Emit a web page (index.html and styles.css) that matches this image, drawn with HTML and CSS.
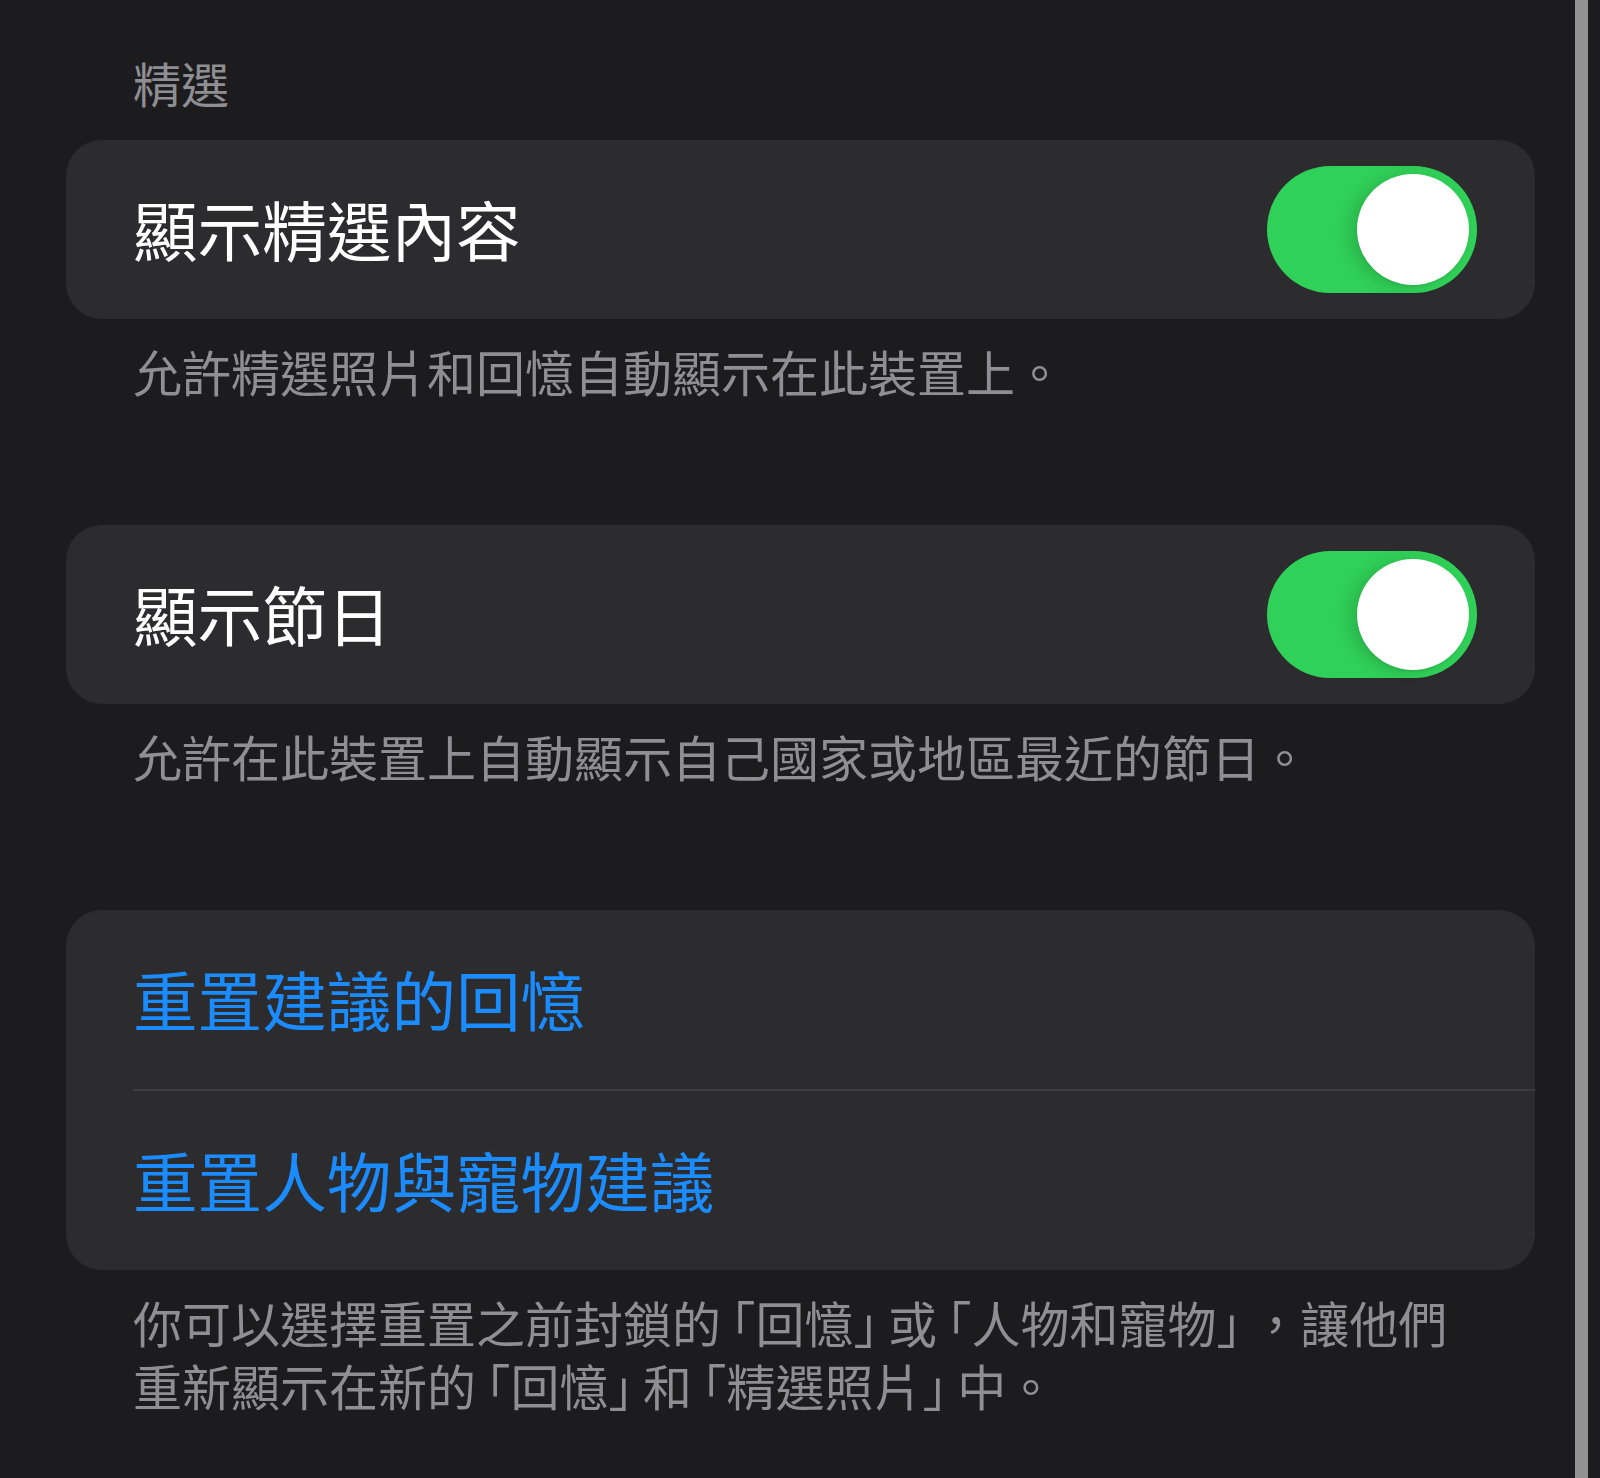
FILE: index.html
```html
<!DOCTYPE html>
<html lang="zh-Hant">
<head>
    <meta charset="UTF-8">
    <meta name="viewport" content="width=device-width, initial-scale=1.0">
    <title>精選</title>
    <link rel="stylesheet" href="styles.css">
</head>
<body>
    <div class="screen">
        <main class="settings">
            <h2 class="section-header">精選</h2>

            <div class="group">
                <div class="row">
                    <span class="row-label">顯示精選內容</span>
                    <span class="toggle on"></span>
                </div>
            </div>
            <p class="footer">允許精選照片和回憶自動顯示在此裝置上。</p>

            <div class="group spaced">
                <div class="row">
                    <span class="row-label">顯示節日</span>
                    <span class="toggle on"></span>
                </div>
            </div>
            <p class="footer">允許在此裝置上自動顯示自己國家或地區最近的節日。</p>

            <div class="group spaced">
                <div class="row">
                    <span class="row-label action">重置建議的回憶</span>
                </div>
                <div class="separator"></div>
                <div class="row">
                    <span class="row-label action">重置人物與寵物建議</span>
                </div>
            </div>
            <p class="footer two-line">
                <span class="line">你可以選擇重置之前封鎖的<span class="open">「</span>回憶<span class="close">」</span>或<span class="open">「</span>人物和寵物<span class="close">」</span>，讓他們</span>
                <span class="line">重新顯示在新的<span class="open">「</span>回憶<span class="close">」</span>和<span class="open">「</span>精選照片<span class="close">」</span>中。</span>
            </p>
        </main>
        <div class="split-divider"></div>
    </div>
</body>
</html>
```

FILE: styles.css
```css
html, body {
    margin: 0;
    padding: 0;
    background-color: #1c1c1e;
}
body {
    font-family: "Noto Sans CJK TC", "Noto Sans CJK SC", "Noto Sans", sans-serif;
    color: #ffffff;
}
.screen {
    display: flex;
    min-height: 1478px;
}
.settings {
    width: 1469px;
    padding: 54px 40px 0 66px;
}
.split-divider {
    width: 13px;
    background-color: #929292;
}
.section-header {
    margin: 0 0 30px;
    padding-left: 67px;
    font-size: 48px;
    line-height: 56px;
    font-weight: 400;
    color: #8e8e93;
}
.group {
    background-color: #2c2c2e;
    border-radius: 36px;
    overflow: hidden;
}
.group.spaced {
    margin-top: 124px;
}
.row {
    height: 179px;
    display: flex;
    align-items: center;
    justify-content: space-between;
    padding: 0 58px 0 67px;
}
.row-label {
    font-size: 64.6px;
    line-height: 80px;
    padding-bottom: 4px;
}
.row-label.action {
    color: #1a8cff;
}
.separator {
    height: 2px;
    margin-left: 67px;
    background-color: #3d3d41;
}
.toggle {
    position: relative;
    width: 210px;
    height: 127px;
    border-radius: 64px;
    background-color: #30d158;
}
.toggle::after {
    content: "";
    position: absolute;
    top: 8px;
    right: 8px;
    width: 112px;
    height: 111px;
    border-radius: 50%;
    background-color: #ffffff;
    box-shadow: -8px 2px 16px rgba(0, 0, 0, 0.14), 0 2px 2px rgba(0, 0, 0, 0.06);
}
.footer {
    margin: 22px 0 0;
    padding-left: 67px;
    font-size: 49px;
    line-height: 60px;
    color: #8e8e93;
    text-spacing-trim: space-all;
}
.footer.two-line {
    margin-top: 20px;
    line-height: 63px;
}
.footer .line {
    display: block;
    white-space: nowrap;
}
.footer .open,
.footer .close {
    font-feature-settings: "halt";
}
.footer .open {
    padding-left: 10px;
}
.footer .close {
    padding-right: 10px;
}
```
